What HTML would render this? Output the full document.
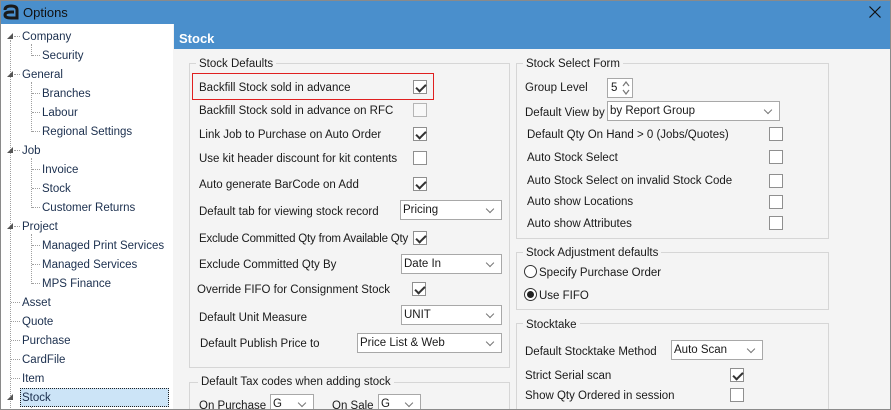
<!DOCTYPE html>
<html style="overflow:hidden;width:891px;height:410px"><head><style>
*{margin:0;padding:0;box-sizing:border-box}
body{width:891px;height:410px;overflow:hidden;position:relative;background:#f4f4f4;font-family:"Liberation Sans",sans-serif;font-size:11.5px;color:#1a1a1a}
.a{position:absolute;white-space:nowrap}
.t{position:absolute;white-space:nowrap;line-height:14px;transform:translateY(-6px)}
.tr{color:#1b2f4e}
.cb{position:absolute;width:14px;height:14px;border:1px solid #8f8f8f;background:#fff}
.cb.k::after{content:"";position:absolute;left:4px;top:1px;width:4px;height:8px;border:solid #333;border-width:0 2px 2px 0;transform:rotate(45deg)}
.sel{position:absolute;height:20px;border:1px solid #a8a8a8;background:#fff;padding:1px 0 0 2px;line-height:16px}
.sel::after{content:"";position:absolute;right:8px;top:5px;width:5px;height:5px;border:solid #777;border-width:0 1.5px 1.5px 0;transform:rotate(45deg)}
.grp{position:absolute;border:1px solid #d6d6d6}
.lg{position:absolute;background:#f4f4f4;padding:0 3px;line-height:14px}
.dot{position:absolute;border-top:1px dotted #a0a0a0}
.vd{position:absolute;border-left:1px dotted #a0a0a0}
.arr{position:absolute;width:0;height:0;border-left:6px solid transparent;border-bottom:6px solid #555}
</style></head><body>
<div class="a" style="left:0;top:0;width:891px;height:410px;border:1px solid #8a8a8a;z-index:5;pointer-events:none"></div>
<div class="a" style="left:0;top:0;width:891px;height:24px;background:#4a8fcc"></div>
<svg class="a" style="left:3px;top:4px" width="16" height="16" viewBox="0 0 16 16"><path d="M2 6 Q2 2 8 2 Q14 2 14 6 L14 14 L8 14 Q2 14 2 11 Q2 8 8 8 L11 8" fill="none" stroke="#1a1a1a" stroke-width="3"/></svg>
<div class="a" style="left:23px;top:5px;font-size:13px;color:#111">Options</div>
<svg class="a" style="left:869px;top:6px" width="12" height="12" viewBox="0 0 12 12"><path d="M0.5 0.5L11.5 11.5M11.5 0.5L0.5 11.5" stroke="#111" stroke-width="1.2"/></svg>
<div class="a" style="left:0;top:24px;width:173px;height:386px;background:#fff"></div>
<div class="a" style="left:174px;top:24px;width:717px;height:25px;background:#4a8fcc;color:#fff;font-weight:bold;font-size:13px;padding:7px 0 0 5px">Stock</div>

<!-- tree -->
<div class="vd" style="left:10px;top:40px;height:370px"></div>
<div class="vd" style="left:31px;top:44px;height:12px"></div>
<div class="vd" style="left:31px;top:82px;height:50px"></div>
<div class="vd" style="left:31px;top:158px;height:50px"></div>
<div class="vd" style="left:31px;top:234px;height:50px"></div>
<div class="vd" style="left:31px;top:405px;height:5px"></div>
<div class="arr" style="left:7px;top:33px"></div>
<div class="arr" style="left:7px;top:71px"></div>
<div class="arr" style="left:7px;top:147px"></div>
<div class="arr" style="left:7px;top:223px"></div>
<div class="arr" style="left:7px;top:394px"></div>
<div class="dot" style="left:14px;top:36px;width:6px"></div>
<div class="dot" style="left:14px;top:74px;width:6px"></div>
<div class="dot" style="left:14px;top:150px;width:6px"></div>
<div class="dot" style="left:14px;top:226px;width:6px"></div>
<div class="dot" style="left:11px;top:302px;width:9px"></div>
<div class="dot" style="left:11px;top:321px;width:9px"></div>
<div class="dot" style="left:11px;top:340px;width:9px"></div>
<div class="dot" style="left:11px;top:359px;width:9px"></div>
<div class="dot" style="left:11px;top:378px;width:9px"></div>
<div class="dot" style="left:32px;top:55px;width:8px"></div>
<div class="dot" style="left:32px;top:93px;width:8px"></div>
<div class="dot" style="left:32px;top:112px;width:8px"></div>
<div class="dot" style="left:32px;top:131px;width:8px"></div>
<div class="dot" style="left:32px;top:169px;width:8px"></div>
<div class="dot" style="left:32px;top:188px;width:8px"></div>
<div class="dot" style="left:32px;top:207px;width:8px"></div>
<div class="dot" style="left:32px;top:245px;width:8px"></div>
<div class="dot" style="left:32px;top:264px;width:8px"></div>
<div class="dot" style="left:32px;top:283px;width:8px"></div>
<div class="a" style="left:20px;top:388px;width:149px;height:19px;background:#cce4f7;border:1px dotted #222"></div>
<div class="t tr" style="left:22px;top:36px">Company</div>
<div class="t tr" style="left:42px;top:55px">Security</div>
<div class="t tr" style="left:22px;top:74px">General</div>
<div class="t tr" style="left:42px;top:93px">Branches</div>
<div class="t tr" style="left:42px;top:112px">Labour</div>
<div class="t tr" style="left:42px;top:131px">Regional Settings</div>
<div class="t tr" style="left:22px;top:150px">Job</div>
<div class="t tr" style="left:42px;top:169px">Invoice</div>
<div class="t tr" style="left:42px;top:188px">Stock</div>
<div class="t tr" style="left:42px;top:207px">Customer Returns</div>
<div class="t tr" style="left:22px;top:226px">Project</div>
<div class="t tr" style="left:42px;top:245px">Managed Print Services</div>
<div class="t tr" style="left:42px;top:264px">Managed Services</div>
<div class="t tr" style="left:42px;top:283px">MPS Finance</div>
<div class="t tr" style="left:22px;top:302px">Asset</div>
<div class="t tr" style="left:22px;top:321px">Quote</div>
<div class="t tr" style="left:22px;top:340px">Purchase</div>
<div class="t tr" style="left:22px;top:359px">CardFile</div>
<div class="t tr" style="left:22px;top:378px">Item</div>
<div class="t tr" style="left:22px;top:397px">Stock</div>

<!-- left group -->
<div class="grp" style="left:189px;top:63px;width:321px;height:305px"></div>
<div class="lg" style="left:196px;top:57px">Stock Defaults</div>
<div class="a" style="left:192px;top:73px;width:242px;height:27px;border:1px solid #e02020"></div>
<div class="t" style="left:199px;top:87px">Backfill Stock sold in advance</div>
<div class="cb k" style="left:413px;top:80px"></div>
<div class="t" style="left:199px;top:110px">Backfill Stock sold in advance on RFC</div>
<div class="cb" style="left:413px;top:103px;background:#f8f8f8;border-color:#b5b5b5"></div>
<div class="t" style="left:199px;top:134px">Link Job to Purchase on Auto Order</div>
<div class="cb k" style="left:413px;top:127px"></div>
<div class="t" style="left:199px;top:158px">Use kit header discount for kit contents</div>
<div class="cb" style="left:413px;top:151px"></div>
<div class="t" style="left:199px;top:184px">Auto generate BarCode on Add</div>
<div class="cb k" style="left:413px;top:177px"></div>
<div class="t" style="left:199px;top:211px">Default tab for viewing stock record</div>
<div class="sel" style="left:400px;top:200px;width:102px">Pricing</div>
<div class="t" style="left:199px;top:238px;letter-spacing:-0.2px">Exclude Committed Qty from Available Qty</div>
<div class="cb k" style="left:413px;top:231px"></div>
<div class="t" style="left:199px;top:264px">Exclude Committed Qty By</div>
<div class="sel" style="left:401px;top:254px;width:101px">Date In</div>
<div class="t" style="left:197px;top:289px">Override FIFO for Consignment Stock</div>
<div class="cb k" style="left:412px;top:282px"></div>
<div class="t" style="left:199px;top:317px">Default Unit Measure</div>
<div class="sel" style="left:401px;top:305px;width:101px">UNIT</div>
<div class="t" style="left:200px;top:343px">Default Publish Price to</div>
<div class="sel" style="left:357px;top:333px;width:145px">Price List &amp; Web</div>

<div class="grp" style="left:189px;top:382px;width:321px;height:40px"></div>
<div class="lg" style="left:198px;top:375px">Default Tax codes when adding stock</div>
<div class="t" style="left:199px;top:405px">On Purchase</div>
<div class="sel" style="left:270px;top:394px;width:44px">G</div>
<div class="t" style="left:332px;top:405px">On Sale</div>
<div class="sel" style="left:378px;top:394px;width:43px">G</div>

<!-- right groups -->
<div class="grp" style="left:516px;top:63px;width:313px;height:176px"></div>
<div class="lg" style="left:523px;top:57px">Stock Select Form</div>
<div class="t" style="left:525px;top:87px">Group Level</div>
<div class="a" style="left:607px;top:78px;width:26px;height:20px;border:1px solid #a8a8a8;background:#fff;padding:2px 0 0 3px;line-height:14px">5</div>
<svg class="a" style="left:622px;top:80px" width="8" height="16" viewBox="0 0 8 16"><path d="M1 6L4 2L7 6M1 10L4 14L7 10" fill="none" stroke="#777" stroke-width="1.2"/></svg>
<div class="t" style="left:525px;top:112px">Default View by</div>
<div class="sel" style="left:607px;top:101px;width:173px">by Report Group</div>
<div class="t" style="left:527px;top:134px">Default Qty On Hand &gt; 0 (Jobs/Quotes)</div>
<div class="cb" style="left:769px;top:127px"></div>
<div class="t" style="left:527px;top:157px">Auto Stock Select</div>
<div class="cb" style="left:769px;top:150px"></div>
<div class="t" style="left:527px;top:180px">Auto Stock Select on invalid Stock Code</div>
<div class="cb" style="left:769px;top:174px"></div>
<div class="t" style="left:527px;top:201px">Auto show Locations</div>
<div class="cb" style="left:769px;top:195px"></div>
<div class="t" style="left:527px;top:223px">Auto show Attributes</div>
<div class="cb" style="left:769px;top:216px"></div>

<div class="grp" style="left:516px;top:252px;width:313px;height:58px"></div>
<div class="lg" style="left:523px;top:246px">Stock Adjustment defaults</div>
<div class="a" style="left:524px;top:265px;width:13px;height:13px;border:1px solid #333;border-radius:50%;background:#fff"></div>
<div class="t" style="left:539px;top:272px">Specify Purchase Order</div>
<div class="a" style="left:524px;top:288px;width:13px;height:13px;border:1px solid #333;border-radius:50%;background:#fff"></div>
<div class="a" style="left:527px;top:291px;width:7px;height:7px;border-radius:50%;background:#222"></div>
<div class="t" style="left:539px;top:295px">Use FIFO</div>

<div class="grp" style="left:516px;top:323px;width:313px;height:100px"></div>
<div class="lg" style="left:523px;top:318px">Stocktake</div>
<div class="t" style="left:525px;top:351px">Default Stocktake Method</div>
<div class="sel" style="left:671px;top:340px;width:92px">Auto Scan</div>
<div class="t" style="left:525px;top:375px">Strict Serial scan</div>
<div class="cb k" style="left:730px;top:368px"></div>
<div class="t" style="left:525px;top:395px">Show Qty Ordered in session</div>
<div class="cb" style="left:730px;top:388px"></div>
</body></html>
